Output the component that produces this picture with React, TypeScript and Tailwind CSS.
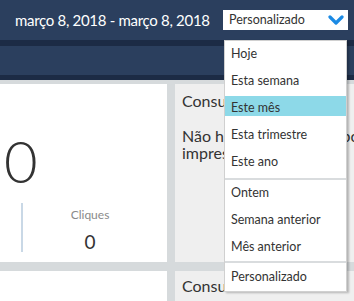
import React from 'react';

const ranges = [
    { cls: 'pb-[2px]', items: ['Hoje', 'Esta semana', 'Este mês', 'Esta trimestre', 'Este ano'] },
    { cls: 'border-t-2 border-[#d9dcde]', items: ['Ontem', 'Semana anterior', 'Mês anterior'] },
    { cls: 'border-t-2 border-[#d9dcde] pt-[1px]', items: ['Personalizado'] },
];

const font = { fontFamily: 'Lato, "Open Sans", sans-serif' };

const Chevron = () => (
    <svg width="16" height="10" viewBox="0 0 16 10" className="block">
        <polyline points="2,2 8,8 14,2" fill="none" stroke="#1b8ae4" strokeWidth="3.2" strokeLinecap="round" strokeLinejoin="round" />
    </svg>
);

export default function App() {
    const active = 'Este mês';

    return (
        <div className="relative w-[354px] h-[301px] overflow-hidden bg-[#d6dadc] text-[#333]" style={font}>
            {/* top bar */}
            <div className="h-[40px] bg-[#2b3f5e] flex items-center pl-[15px]">
                <span className="flex-1 min-w-0 text-white text-[15px] tracking-[-0.3px] leading-none whitespace-nowrap">março 8, 2018 - março 8, 2018</span>
                <div className="shrink-0 mr-[6px] w-[125px] h-[20px] bg-white flex items-center pl-[6px] pr-[4px]">
                    <span className="text-[12.5px] leading-none text-[#333]">Personalizado</span>
                    <span className="ml-auto"><Chevron /></span>
                </div>
            </div>
            <div className="h-[6px] bg-[#1c2b45]" />
            <div className="h-[29px] bg-[#2b3f5e]" />
            <div className="h-[5px] bg-[#1c2b45]" />

            {/* cards */}
            <div className="pt-[4px] grid grid-cols-[167px_1fr] gap-x-[8px] gap-y-[9px] grid-rows-[178px_60px]">
                <div className="bg-white relative">
                    <div className="pt-[44px] pl-[4px] text-[58px] font-light leading-[66px] text-[#333]">0</div>
                    <div className="flex mt-[9px]">
                        <div className="ml-[21px] w-[2px] h-[49px] bg-[#c9d8e6]" />
                        <div className="ml-[41px] w-[52px] flex flex-col items-center">
                            <span className="text-[12px] text-[#8a8a8a] leading-[14px] mt-[5px]">Cliques</span>
                            <span className="text-[19px] leading-[20px] mt-[10px] text-[#333]">0</span>
                        </div>
                    </div>
                </div>
                <div className="bg-[#efefef] overflow-hidden pl-[7px] pt-[7px] mr-[-20px]">
                    <div className="text-[16px] leading-[20px]">Consultas</div>
                    <div className="text-[16px] leading-[17px] mt-[16px] whitespace-nowrap">
                        Não há dados do filtro por
                        <br />
                        impressões
                    </div>
                </div>
                <div className="bg-white" />
                <div className="bg-[#efefef] overflow-hidden pl-[7px] pt-[5px] mr-[-20px]">
                    <div className="text-[16px] leading-[20px]">Consultas</div>
                </div>
            </div>

            {/* dropdown menu */}
            <div className="absolute left-[224px] top-[40px] w-[123px] bg-white border border-[#d0d0d0] shadow-[2px_1px_2px_rgba(0,0,0,0.25)]">
                {ranges.map((group, gi) => (
                    <div key={gi} className={group.cls}>
                        {group.items.map((label) => (
                            <div key={label} className="h-[27px] pt-[1px]">
                                <div className={`h-[20px] pl-[6px] pt-[4px] text-[12.5px] leading-[16px] text-[#333] ${label === active ? 'bg-[#8dd9e8]' : ''}`}>
                                    {label}
                                </div>
                            </div>
                        ))}
                    </div>
                ))}
            </div>
        </div>
    );
}
